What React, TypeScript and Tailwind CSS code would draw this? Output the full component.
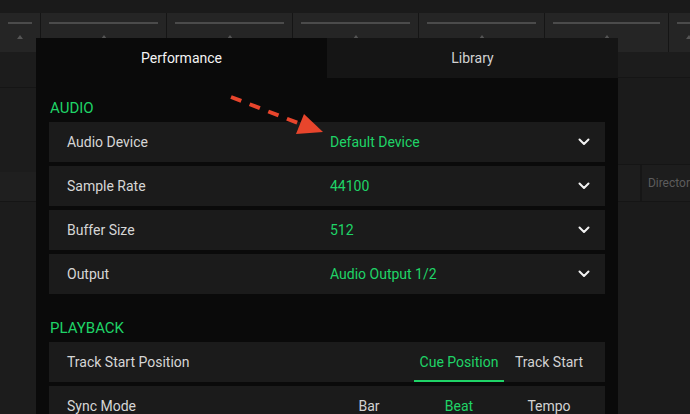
import { ReactNode } from "react";

const GREEN = "text-[#1fd467]";

function Chevron() {
  return (
    <svg width="12" height="8" viewBox="0 0 12 8" fill="none" aria-hidden="true">
      <path d="M1.5 1.5L6 6L10.5 1.5" stroke="#f2f2f2" strokeWidth="2" strokeLinecap="round" strokeLinejoin="round" />
    </svg>
  );
}

function SelectRow({ label, value }: { label: string; value: string }) {
  return (
    <div className="grid h-10 grid-cols-[263px_1fr_auto] items-center bg-[#1b1b1b] pl-[18px] pr-[15px]">
      <span className="text-[14px] text-[#d6d6d6]">{label}</span>
      <span className={`text-[14px] ${GREEN}`}>{value}</span>
      <Chevron />
    </div>
  );
}

function SegRow({ label, options, active, underline }: { label: string; options: string[]; active: number; underline?: boolean }) {
  return (
    <div className="flex h-10 items-stretch bg-[#1b1b1b] pl-[18px] pr-[11px]">
      <span className="flex flex-1 items-center text-[14px] text-[#d6d6d6]">{label}</span>
      {options.map((o, i) => (
        <div
          key={o}
          className={`flex w-[90px] items-center justify-center text-[14px] ${
            i === active ? GREEN : "text-[#d2d2d2]"
          } ${i === active && underline ? "border-b-2 border-[#1fd467] pt-[2px]" : ""}`}
        >
          {o}
        </div>
      ))}
    </div>
  );
}

function Section({ title, children }: { title: string; children: ReactNode }) {
  return (
    <div className="flex flex-col">
      <div className={`flex h-[44px] items-end pb-[3px] pl-[14px] text-[15px] ${GREEN}`}>{title}</div>
      <div className="flex flex-col gap-[4px] pl-[13px] pr-[13px]">{children}</div>
    </div>
  );
}

function TopCell({ w }: { w: number }) {
  return (
    <div className="relative h-full shrink-0 border-r border-[#151515] bg-[#252525]" style={{ width: w }}>
      <div className="mx-[8px] mt-[9px] h-[2px] bg-[#4b4b4b]" />
      <div className="mx-auto mt-[11px] h-0 w-0 border-x-[3px] border-b-[4px] border-x-transparent border-b-[#555]" />
    </div>
  );
}

export default function App() {
  return (
    <div className="relative h-[414px] w-[690px] overflow-hidden bg-[#1b1b1b] font-['Roboto',sans-serif]">
      {/* background app */}
      <div className="flex h-full flex-col">
        <div className="h-[13px] bg-[#1a1a1a]" />
        <div className="flex h-[39px] shrink-0">
          <TopCell w={41} />
          <TopCell w={126} />
          <TopCell w={126} />
          <TopCell w={126} />
          <TopCell w={126} />
          <TopCell w={124} />
          <TopCell w={40} />
        </div>
        <div className="flex flex-1">
          <div className="flex w-[36px] flex-col">
            <div className="h-[36px] border-b border-[#151515] bg-[#1c1c1c]" />
            <div className="h-[84px] bg-[#1c1c1c]" />
            <div className="h-[30px] border-b border-[#151515] bg-[#1f1f1f]" />
            <div className="flex-1 bg-[#1c1c1c]" />
          </div>
          <div className="flex-1" />
          <div className="flex w-[72px] flex-col">
            <div className="h-[26px] border-b border-[#151515] bg-[#1c1c1c]" />
            <div className="h-[86px] bg-[#1b1b1b]" />
            <div className="flex h-[38px] border-y border-[#151515] bg-[#1d1d1d]">
              <div className="w-[27px] border-r-2 border-[#161616]" />
              <div className="flex items-center pl-[6px] text-[12px] text-[#5c5c5c]">Director</div>
            </div>
            <div className="flex-1 bg-[#1b1b1b]" />
          </div>
        </div>
      </div>

      {/* preferences dialog */}
      <div className="absolute left-[36px] top-[38px] flex h-[400px] w-[582px] flex-col bg-[#0a0a0a]">
        <div className="flex h-10 shrink-0">
          <div className="flex flex-1 items-center justify-center text-[14px] text-[#f4f4f4]">Performance</div>
          <div className="flex flex-1 items-center justify-center bg-[#151515] text-[14px] text-[#d2d2d2]">Library</div>
        </div>
        <Section title="AUDIO">
          <SelectRow label="Audio Device" value="Default Device" />
          <SelectRow label="Sample Rate" value="44100" />
          <SelectRow label="Buffer Size" value="512" />
          <SelectRow label="Output" value="Audio Output 1/2" />
        </Section>
        <div className="h-[4px]" />
        <Section title="PLAYBACK">
          <SegRow label="Track Start Position" options={["Cue Position", "Track Start"]} active={0} underline />
          <SegRow label="Sync Mode" options={["Bar", "Beat", "Tempo"]} active={1} />
        </Section>
      </div>

      {/* annotation arrow */}
      <svg className="pointer-events-none absolute left-0 top-0" width="690" height="414" aria-hidden="true">
        <line x1="231" y1="97" x2="303" y2="125" stroke="#e8452c" strokeWidth="4" strokeDasharray="11 9" />
        <polygon points="304,114 296,134 323,132" fill="#e8452c" />
      </svg>
    </div>
  );
}
